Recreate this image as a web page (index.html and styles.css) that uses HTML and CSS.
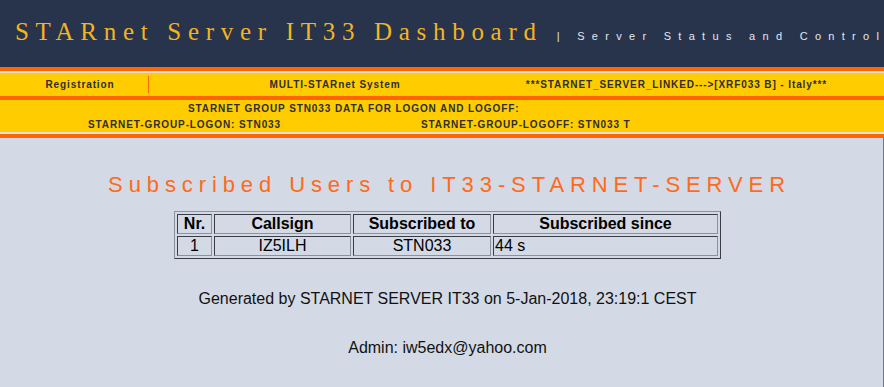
FILE: index.html
```html
<!DOCTYPE html>
<html>
<head>
<meta charset="utf-8">
<title>STARnet Server IT33 Dashboard</title>
<link rel="stylesheet" href="styles.css">
</head>
<body>
<div class="header">
  <h1 class="title">STARnet Server IT33 Dashboard</h1>
  <span class="subtitle">| Server Status and Control</span>
</div>
<div class="strip-orange"></div>
<div class="strip-light"></div>
<div class="nav1">
  <div class="nav1-cell first">Registration</div>
  <div class="nav1-cell second">MULTI-STARnet System</div>
  <div class="nav1-cell third">***STARNET_SERVER_LINKED---&gt;[XRF033 B] - Italy***</div>
</div>
<div class="strip-orange"></div>
<div class="nav2">
  <div class="nav2-title">STARNET GROUP STN033 DATA FOR LOGON AND LOGOFF:</div>
  <div class="nav2-logon">STARNET-GROUP-LOGON: STN033</div>
  <div class="nav2-logoff">STARNET-GROUP-LOGOFF: STN033 T</div>
</div>
<div class="strip-light"></div>
<div class="strip-orange"></div>
<div class="main">
  <h2 class="heading">Subscribed Users to IT33-STARNET-SERVER</h2>
  <table class="users">
    <tr>
      <th class="c-nr">Nr.</th>
      <th class="c-call">Callsign</th>
      <th class="c-to">Subscribed to</th>
      <th class="c-since">Subscribed since</th>
    </tr>
    <tr>
      <td class="center">1</td>
      <td class="center">IZ5ILH</td>
      <td class="center">STN033</td>
      <td>44 s</td>
    </tr>
  </table>
  <p class="info">Generated by STARNET SERVER IT33 on 5-Jan-2018, 23:19:1 CEST</p>
  <p class="info">Admin: iw5edx@yahoo.com</p>
</div>
</body>
</html>
```
FILE: styles.css
```css
html, body {
  margin: 0;
  padding: 0;
}
body {
  background: #d3dae6;
  font-family: "Liberation Sans", Arial, sans-serif;
  overflow: hidden;
}
.header {
  background: #27344b;
  height: 67px;
  box-sizing: border-box;
  padding: 18px 0 0 15px;
  display: flex;
  align-items: baseline;
  white-space: nowrap;
  overflow: hidden;
}
.title {
  margin: 0;
  font-family: "Liberation Serif", "Times New Roman", serif;
  font-weight: normal;
  font-size: 25px;
  letter-spacing: 6.7px;
  color: #f5b320;
}
.subtitle {
  margin-left: 14px;
  font-size: 11px;
  letter-spacing: 7.3px;
  color: #e4e7ee;
}
.strip-orange {
  height: 4px;
  background: #ff6600;
}
.strip-light {
  height: 2px;
  background: #e2e0d6;
}
.nav1 {
  background: #ffcc00;
  height: 23px;
  display: grid;
  grid-template-columns: 148px 373px 1fr;
  align-items: center;
  font-size: 10px;
  font-weight: bold;
  letter-spacing: 0.9px;
  color: #2e2e33;
}
.nav1-cell {
  text-align: center;
  white-space: nowrap;
}
.nav1-cell.first {
  padding-left: 12px;
  box-sizing: border-box;
}
.nav1-cell.second {
  border-left: 1px solid #ff6600;
  height: 17px;
  line-height: 17px;
}
.nav1-cell.third {
  padding-right: 52px;
}
.nav2 {
  background: #ffcc00;
  height: 32px;
  box-sizing: border-box;
  padding-top: 1px;
  display: grid;
  grid-template-columns: 370px 312px;
  line-height: 15.5px;
  font-size: 10px;
  font-weight: bold;
  letter-spacing: 0.9px;
  color: #2e2e33;
  white-space: nowrap;
}
.nav2-title {
  grid-column: 1 / -1;
  padding-left: 188px;
}
.nav2-logon {
  padding-left: 88px;
}
.nav2-logoff {
  padding-left: 51px;
}
.main {
  padding: 34px 0 40px 12px;
  border-right: 1px solid #6f7886;
  display: flex;
  flex-direction: column;
  align-items: center;
}
.heading {
  margin: 0 0 13px 4px;
  font-weight: normal;
  font-size: 22px;
  letter-spacing: 5.9px;
  color: #ff6a1a;
  white-space: nowrap;
}
.users {
  border: 1px solid;
  border-color: #8b929e #3a3d44 #3a3d44 #8b929e;
  border-spacing: 2px;
  table-layout: fixed;
  width: 547px;
  font-size: 16px;
  color: #000;
}
.users th, .users td {
  border: 1px solid;
  border-color: #3a3d44 #8b929e #8b929e #3a3d44;
  padding: 0 1px;
  line-height: 18px;
}
.users th {
  font-weight: bold;
}
.c-nr { width: 31px; }
.c-call { width: 133px; }
.c-to { width: 134px; }
.c-since { width: 221px; }
.center {
  text-align: center;
}
.info {
  margin: 31px 0 0 0;
  font-size: 16px;
  line-height: 18px;
  color: #111;
}
.info + .info {
  margin-top: 31px;
}
```
